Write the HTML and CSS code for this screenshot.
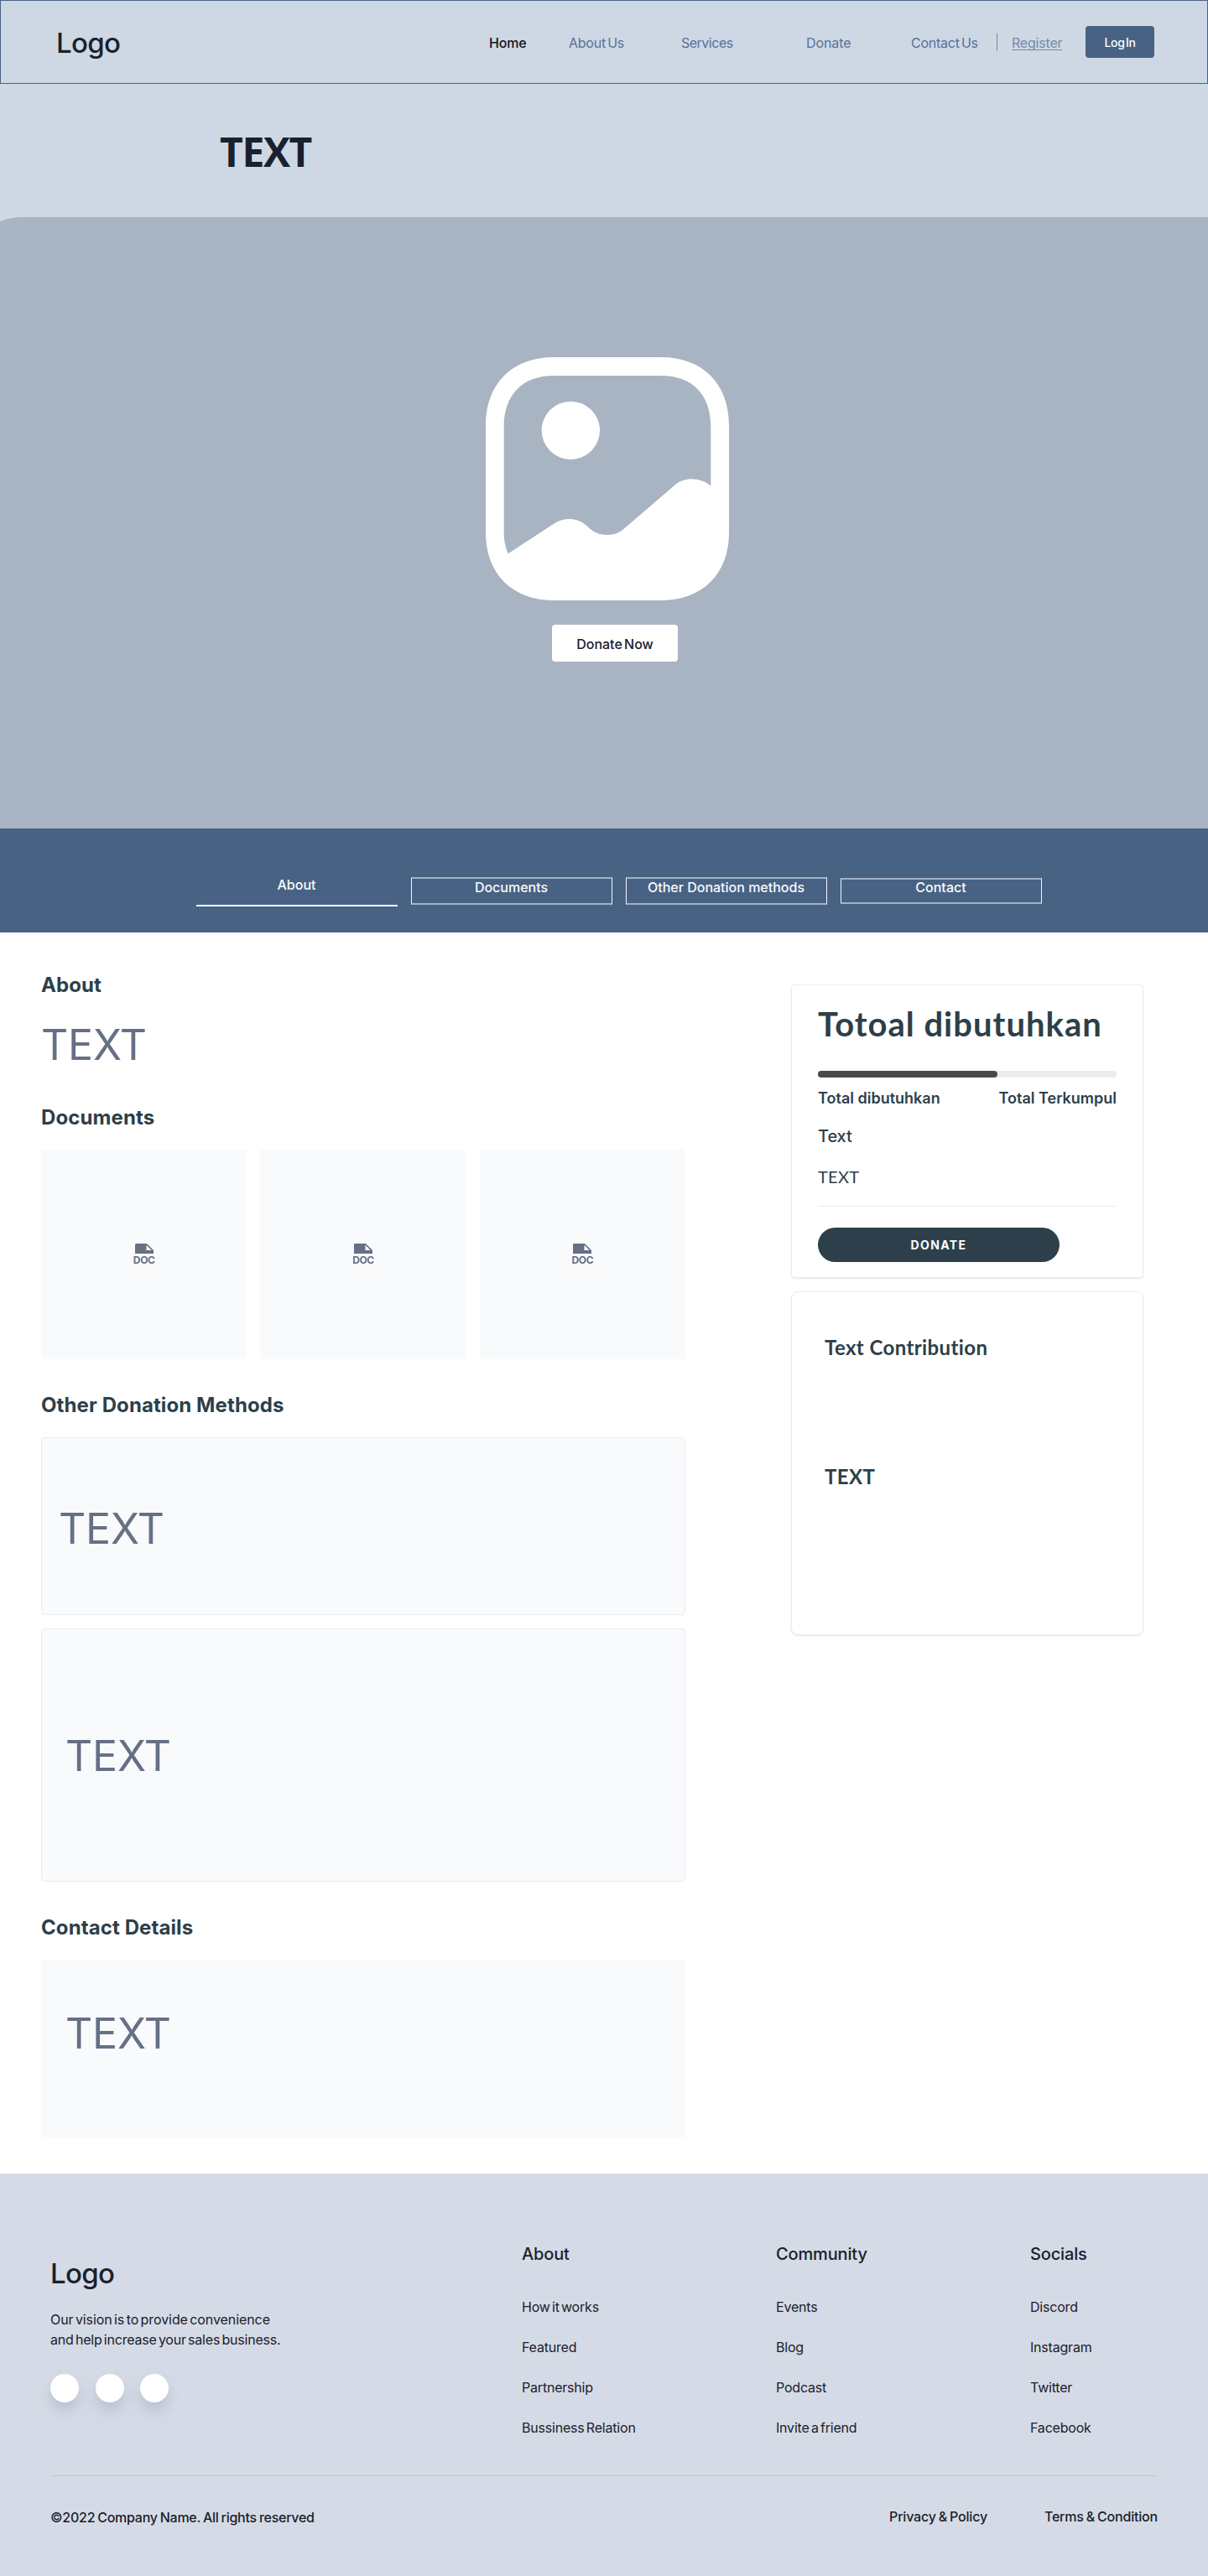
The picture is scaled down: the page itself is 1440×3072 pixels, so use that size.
FILE: index.html
```
<!DOCTYPE html>
<html lang="en">
<head>
<meta charset="utf-8">
<title>Donation detail</title>
<link rel="stylesheet" href="styles.css">
</head>
<body>
<header class="nav">
  <a class="logo">Logo</a>
  <nav class="nav-links">
    <a class="nav-link active">Home</a>
    <a class="nav-link about">About Us</a>
    <a class="nav-link services">Services</a>
    <a class="nav-link donate">Donate</a>
    <a class="nav-link contact">Contact Us</a>
  </nav>
  <span class="nav-divider"></span>
  <a class="register">Register</a>
  <button class="login">Log In</button>
</header>

<section class="page-title"><h1>TEXT</h1></section>

<section class="hero-wrap">
  <div class="hero">
    <svg class="hero-image" viewBox="0 0 870 870" width="290" height="290" fill="#fff">
      <path fill-rule="evenodd" d="M243 0H628C775 0 870 95 870 243V628C870 775 775 870 628 870H243C95 870 0 775 0 628V243C0 95 95 0 243 0ZM80 703L243 596C278 572 328 574 358 601L378 618C408 642 463 642 493 615L678 456C710 427 772 429 805 461V248C805 136 740 66 628 66H243C131 66 65 136 65 248V628C65 656 71 683 80 703Z"/>
      <circle cx="304" cy="262" r="104"/>
    </svg>
    <button class="donate-now">Donate Now</button>
  </div>
</section>

<nav class="tabs">
  <a class="tab current">About</a>
  <a class="tab">Documents</a>
  <a class="tab">Other Donation methods</a>
  <a class="tab short">Contact</a>
</nav>

<main class="content">
  <div class="left">
    <h2>About</h2>
    <p class="placeholder intro">TEXT</p>
    <h2 class="h-docs">Documents</h2>
    <div class="docs">
      <div class="doc"><svg width="22" height="12" viewBox="2 1 22 12"><path fill="#667085" fill-rule="evenodd" d="M3.300 1H16L24 9V13H2V2.300Q2 1 3.300 1ZM15.500 2.800V9H21.700Z"/></svg><span class="doc-label">DOC</span></div>
      <div class="doc"><svg width="22" height="12" viewBox="2 1 22 12"><path fill="#667085" fill-rule="evenodd" d="M3.300 1H16L24 9V13H2V2.300Q2 1 3.300 1ZM15.500 2.800V9H21.700Z"/></svg><span class="doc-label">DOC</span></div>
      <div class="doc"><svg width="22" height="12" viewBox="2 1 22 12"><path fill="#667085" fill-rule="evenodd" d="M3.300 1H16L24 9V13H2V2.300Q2 1 3.300 1ZM15.500 2.800V9H21.700Z"/></svg><span class="doc-label">DOC</span></div>
    </div>
    <h2 class="h-methods">Other Donation Methods</h2>
    <div class="panel method-one"><p class="placeholder">TEXT</p></div>
    <div class="panel method-two"><p class="placeholder">TEXT</p></div>
    <h2 class="h-contact">Contact Details</h2>
    <div class="panel details"><p class="placeholder">TEXT</p></div>
  </div>

  <aside class="right">
    <section class="card">
      <h3>Totoal dibutuhkan</h3>
      <div class="progress"><div class="progress-fill" style="width:60%"></div></div>
      <div class="totals"><span>Total dibutuhkan</span><span>Total Terkumpul</span></div>
      <p class="amount">Text</p>
      <p class="note">TEXT</p>
      <button class="donate-btn">DONATE</button>
    </section>
    <section class="card contributions">
      <h4>Text Contribution</h4>
      <h4>TEXT</h4>
    </section>
  </aside>
</main>

<footer class="footer">
  <div class="footer-top">
    <div class="brand">
      <a class="footer-logo">Logo</a>
      <p class="vision"><span class="line-one">Our vision is to provide convenience</span><br>and help increase your sales business.</p>
      <div class="socials"><i></i><i></i><i></i></div>
    </div>
    <div class="col"><h5>About</h5><a>How it works</a><a>Featured</a><a>Partnership</a><a>Bussiness Relation</a></div>
    <div class="col"><h5>Community</h5><a>Events</a><a>Blog</a><a>Podcast</a><a>Invite a friend</a></div>
    <div class="col"><h5>Socials</h5><a>Discord</a><a>Instagram</a><a>Twitter</a><a>Facebook</a></div>
  </div>
  <div class="footer-bottom">
    <span class="copyright">©2022 Company Name. All rights reserved</span>
    <div class="legal"><a>Privacy &amp; Policy</a><a>Terms &amp; Condition</a></div>
  </div>
</footer>
</body>
</html>
```
FILE: styles.css
```
* { box-sizing: border-box; }
body, h1, h2, h3, h4, h5, p { margin: 0; }
body {
  font-family: Inter, "Liberation Sans", sans-serif;
  font-size: 16px;
  line-height: 24px;
  color: #1a202c;
  background: #fff;
}
a, span, h1, h2, h3, h4, h5 { white-space: nowrap; }
button { border: 0; padding: 0; font-family: inherit; }

/* Navigation */
.nav {
  display: flex;
  align-items: center;
  height: 100px;
  padding: 1px 63px 0 66px;
  border: 1px solid #486284;
  background: #ced8e4;
}
.logo, .footer-logo { font-size: 33px; font-weight: 500; line-height: 40px; letter-spacing: -0.7px; }
.nav-links { display: flex; margin-left: auto; letter-spacing: -0.25px; word-spacing: -2px; }
.nav-link { width: 95px; color: #56709a; }
.nav-link.active { color: #10131c; font-weight: 500; letter-spacing: -0.2px; }
.nav-link.about { width: 134px; }
.nav-link.services { width: 149px; letter-spacing: -0.5px; }
.nav-link.donate { width: 125px; letter-spacing: -0.1px; }
.nav-link.contact { width: 102px; }
.nav-divider { width: 1px; height: 21px; margin: 0 17px 0 0; background: #7389a9; }
.register {
  width: 61px;
  margin-right: 27px;
  color: #7489ac;
  letter-spacing: -0.2px;
  text-decoration: underline;
  text-underline-offset: 2px;
  text-decoration-thickness: 1px;
  text-decoration-skip-ink: none;
}
.login {
  width: 82px;
  height: 38px;
  margin-top: -2px;
  padding-top: 1px;
  border-radius: 4px;
  font-size: 14px;
  font-weight: 500;
  letter-spacing: -0.35px;
  word-spacing: -2px;
  color: #fff;
  background: #486284;
}

/* Title and hero */
.page-title { height: 159px; padding: 53px 0 0 262px; background: #ced8e4; }
.page-title h1 {
  font: 700 48px/56px "Open Sans", sans-serif;
  letter-spacing: -1.4px;
}
.hero-wrap { overflow: hidden; background: #ced8e4; }
.hero {
  display: flex;
  flex-direction: column;
  align-items: center;
  height: 729px;
  margin-left: -35px;
  padding: 167px 0 0 43px;
  border-radius: 60px 0 0 0;
  background: #a9b4c3;
}
.donate-now {
  width: 150px;
  height: 44px;
  margin: 29px 0 0 18px;
  padding-top: 2px;
  border-radius: 4px;
  font-size: 16px;
  font-weight: 500;
  letter-spacing: 0;
  word-spacing: -2px;
  color: #1a202c;
  background: #fff;
}

/* Tabs */
.tabs {
  display: grid;
  grid-template-columns: repeat(4, 240px);
  gap: 16px;
  align-items: start;
  height: 124px;
  padding: 58px 0 0 234px;
  background: #486284;
}
.tab {
  height: 33px;
  padding-right: 1px;
  border: 1px solid #f4f6f9;
  border-width: 2px 1px;
  border-top-color: #a3b1c4;
  border-bottom-color: #a3b1c4;
  font-weight: 500;
  line-height: 20px;
  text-align: center;
  color: #f9fafc;
}
.tab.current { height: 35px; border: 0; border-bottom: 2px solid #fff; line-height: 18px; }
.tab.short { height: 31px; margin-top: 1px; line-height: 18px; }

/* Content */
.content {
  display: grid;
  grid-template-columns: 768px 420px;
  column-gap: 126px;
  align-items: start;
  height: 1480px;
  padding: 46px 0 0 49px;
}
h2 { font-size: 24px; font-weight: 700; line-height: 33px; letter-spacing: 0.1px; color: #2d3f4a; }
.placeholder { font-size: 50px; line-height: 60px; letter-spacing: -0.2px; color: #667085; }
.intro { margin-top: 25px; }
.h-docs { margin-top: 40px; }
.docs { display: grid; grid-template-columns: repeat(3, 1fr); gap: 16px; margin-top: 22px; }
.doc {
  display: flex;
  flex-direction: column;
  align-items: center;
  height: 250px;
  padding-top: 112px;
  border-radius: 4px;
  background: #f9fafc;
}
.doc-label { font-size: 12px; font-weight: 700; line-height: 16px; letter-spacing: -0.4px; color: #667085; }
.h-methods { margin-top: 38px; }
.panel {
  display: flex;
  align-items: center;
  border: 1px solid #eaecef;
  border-radius: 4px;
  background: #f9fafc;
}
.method-one { height: 212px; margin-top: 22px; padding: 5px 0 0 20px; }
.method-two { height: 302px; margin-top: 16px; padding: 2px 0 0 28px; }
.h-contact { margin-top: 38px; }
.details { height: 212px; margin-top: 22px; padding: 0 0 36px 29px; border: 0; border-radius: 2px; }

/* Side cards */
.right { padding-top: 16px; }
.card {
  height: 350px;
  padding: 30px 31px 0;
  border: 1px solid #eaecef;
  border-radius: 4px;
  box-shadow: 0 1px 2px rgba(16, 24, 40, 0.1);
  color: #2d3f4a;
}
h3, h4 { font-family: Lato, "Open Sans", sans-serif; font-weight: 700; }
h3 { font-size: 40px; line-height: 32px; letter-spacing: 1px; }
.progress { height: 8px; margin-top: 40px; border-radius: 4px; background: #eaecf0; }
.progress-fill { height: 8px; border-radius: 4px; background: #4a4a4a; }
.totals {
  display: flex;
  justify-content: space-between;
  margin-top: 13px;
  font-size: 18px;
  font-weight: 600;
}
.amount { margin-top: 21px; font-size: 20px; font-weight: 500; letter-spacing: -0.1px; }
.note {
  height: 48px;
  margin-top: 24px;
  border-bottom: 1px solid #eaecef;
  font: 400 20px/24px Lato, sans-serif;
  letter-spacing: 0.3px;
}
.donate-btn {
  display: block;
  width: 288px;
  height: 41px;
  margin-top: 25px;
  border-radius: 21px;
  font-size: 14px;
  font-weight: 700;
  letter-spacing: 1.4px;
  color: #fff;
  background: #2d3f4a;
}
.contributions { height: 410px; margin-top: 16px; padding: 50px 39px 0; border-radius: 8px; }
h4 { font-size: 24px; line-height: 32px; letter-spacing: 0.4px; }
h4 + h4 { margin-top: 122px; }

/* Footer */
.footer { height: 480px; padding: 0 60px; background: #d5dbe6; }
.footer-top {
  display: grid;
  grid-template-columns: 562px 303px 303px 1fr;
  height: 361px;
  padding-top: 82px;
  border-bottom: 1px solid #b9c6d5;
}
.brand { padding-top: 17px; }
.footer-logo { display: block; }
.vision { margin-top: 23px; letter-spacing: -0.21px; word-spacing: -2px; }
.line-one { letter-spacing: -0.08px; }
.socials { display: flex; gap: 19.500px; margin-top: 29px; }
.socials i {
  width: 34px;
  height: 34px;
  border-radius: 50%;
  background: #fff;
  box-shadow: 0 10px 16px rgba(113, 138, 165, 0.3);
}
.col { display: flex; flex-direction: column; gap: 24px; letter-spacing: -0.2px; word-spacing: -2px; }
.col h5 { margin-bottom: 12px; font-size: 20px; font-weight: 500; line-height: 29px; letter-spacing: -0.15px; }
.footer-bottom { display: flex; justify-content: space-between; padding-top: 36px; font-weight: 500; word-spacing: -1px; }
.copyright { padding-top: 1px; letter-spacing: -0.26px; }
.legal { display: flex; gap: 68px; letter-spacing: -0.2px; }
```
